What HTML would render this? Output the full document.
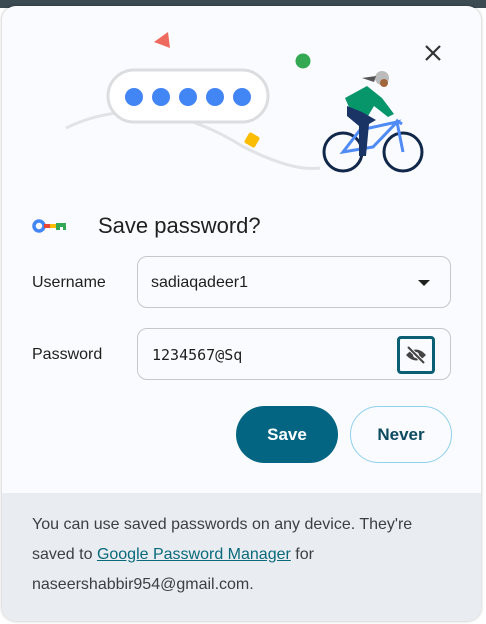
<!DOCTYPE html>
<html><head><style>
body{margin:0;width:486px;height:624px;background:#fff;position:relative;overflow:hidden;font-family:"Liberation Sans",sans-serif}
.top{position:absolute;left:0;top:0;width:486px;height:8px;background:#3c4a52}
.dlg{position:absolute;left:2px;top:6px;width:479px;height:615px;background:#fafbfe;border-radius:14px;overflow:hidden;box-shadow:0 0 3px rgba(0,0,0,.3)}
.foot{position:absolute;left:0;top:487px;width:479px;height:128px;background:#e9ecf0;color:#3d4043;font-size:16px;line-height:30px;padding:17px 0 0 30px;box-sizing:border-box}
.foot a{color:#0a6a7a;text-decoration:underline}
.lbl{position:absolute;left:30px;font-size:16px;color:#1f1f1f}
.inp{position:absolute;left:135px;width:314px;height:52px;border:1px solid #c4c7cb;border-radius:10px;box-sizing:border-box;font-size:16px;color:#1f1f1f}
.btn{position:absolute;top:400px;height:57px;border-radius:29px;box-sizing:border-box;font-size:17px;font-weight:bold;display:flex;align-items:center;justify-content:center}
</style></head><body>
<div class="top"></div>
<div class="dlg">
<svg width="479" height="180" style="position:absolute;left:0;top:0">
<path d="M64 122 Q110 100 160 108 Q200 115 240 140 Q290 166 318 162" fill="none" stroke="#e2e3e6" stroke-width="3"/>
<rect x="106" y="64" width="160" height="52" rx="26" fill="#fff" stroke="#dcdde0" stroke-width="3"/>
<g fill="#4285f4"><circle cx="132" cy="91" r="9"/><circle cx="159" cy="91" r="9"/><circle cx="186" cy="91" r="9"/><circle cx="213" cy="91" r="9"/><circle cx="240" cy="91" r="9"/></g>
<path d="M152 36 L166 26 L168 42 Z" fill="#ee6a5e"/>
<circle cx="301" cy="55" r="7.5" fill="#34a853"/>
<rect x="244" y="128" width="12" height="12" rx="2" fill="#fbbc04" transform="rotate(30 250 134)"/>
<path d="M424 40 L438 54 M438 40 L424 54" stroke="#333" stroke-width="2.2"/>
<circle cx="341" cy="146" r="19" fill="none" stroke="#12284a" stroke-width="3"/>
<circle cx="401" cy="146" r="19" fill="none" stroke="#12284a" stroke-width="3"/>
<path d="M341 146 L358 124 L395 116 L371 141 Z M395 116 L401 146 M394 114 L400 118" fill="none" stroke="#4f8af5" stroke-width="3"/>
<path d="M343 92 L365 80 L380 92 L392 108 L386 111 L372 100 L366 110 L350 108 Z" fill="#079669"/>
<path d="M345 100 L360 106 L374 114 L367 118 L364 150 L357 150 L357 120 L345 110 Z" fill="#1b3466"/>
<circle cx="380" cy="72" r="7" fill="#bbb"/><circle cx="382" cy="77" r="4" fill="#a0673c"/>
<path d="M360 72 L374 70 L372 76 Z" fill="#555"/>
</svg>
<svg width="34" height="16" style="position:absolute;left:30px;top:213px"><circle cx="7" cy="7" r="5" fill="none" stroke="#4285f4" stroke-width="3.5"/><rect x="12" y="5" width="6" height="4" fill="#ea4335"/><rect x="18" y="5" width="6" height="4" fill="#fbbc04"/><path d="M24 4 H34 V11 H31 V8 H28 V11 H24 Z" fill="#34a853"/></svg>
<div style="position:absolute;left:96px;top:207px;font-size:22px;color:#1f1f1f">Save password?</div>
<div class="lbl" style="top:268px">Username</div>
<div class="inp" style="top:250px;padding:17px 0 0 13px">sadiaqadeer1<span style="position:absolute;right:20px;top:23px;border:6px solid transparent;border-top:6px solid #1f1f1f;border-bottom:none;width:0;height:0"></span></div>
<div class="lbl" style="top:340px">Password</div>
<div class="inp" style="top:322px;padding:17px 0 0 14px;font-family:'DejaVu Sans Mono',monospace;font-size:15px">1234567@Sq
<div style="position:absolute;left:259px;top:7px;width:38px;height:38px;border:3px solid #0b5f74;border-radius:4px;box-sizing:border-box;display:flex;align-items:center;justify-content:center">
<svg width="22" height="18" viewBox="0 0 22 18"><path d="M1 9 Q11 -2 21 9 Q11 20 1 9Z" fill="#444"/><circle cx="11" cy="9" r="3" fill="#fafbfe"/><path d="M3 1 L19 17" stroke="#fafbfe" stroke-width="4"/><path d="M3 1 L19 17" stroke="#444" stroke-width="2"/></svg></div></div>
<div class="btn" style="left:234px;width:102px;background:#046582;color:#fff">Save</div>
<div class="btn" style="left:348px;width:102px;border:1.5px solid #8fd0ec;color:#0c4a5e">Never</div>
<div class="foot">You can use saved passwords on any device. They're<br>saved to <a>Google Password Manager</a> for<br>naseershabbir954@gmail.com.</div>
</div>
</body></html>
